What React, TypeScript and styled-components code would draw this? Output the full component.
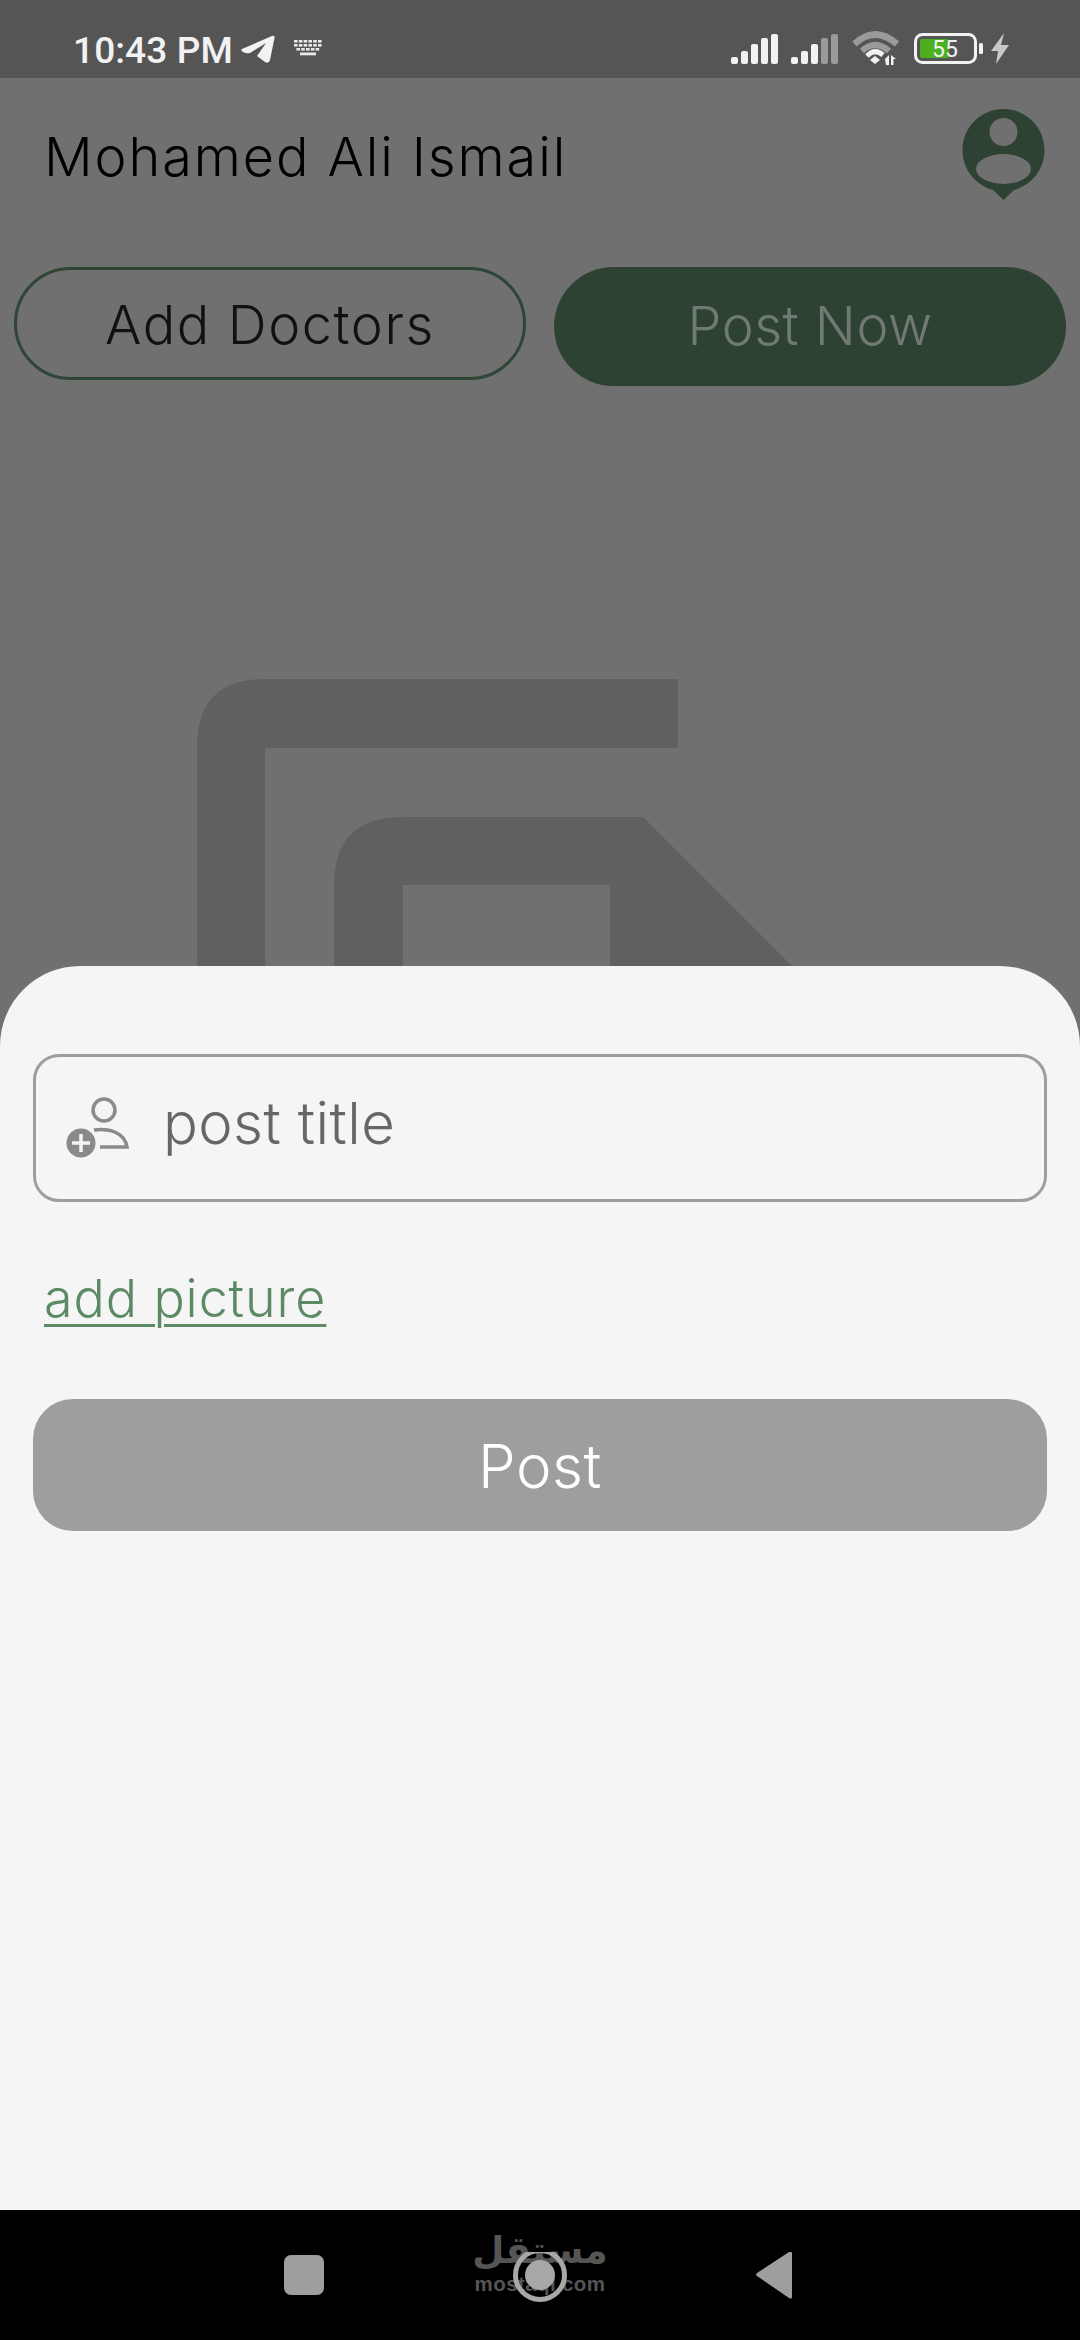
import React from "react";
import styled, { createGlobalStyle } from "styled-components";

const Global = createGlobalStyle`
  html, body { margin: 0; padding: 0; background: #707070; }
  * { box-sizing: border-box; }
`;

const Phone = styled.div`
  width: 1080px;
  height: 2340px;
  display: flex;
  flex-direction: column;
  overflow: hidden;
  background: #707070;
  font-family: Inter, "Noto Sans", sans-serif;
  font-weight: 300;
`;

const StatusBar = styled.div`
  height: 78px;
  flex: none;
  background: #555555;
  display: flex;
  align-items: flex-start;
  padding: 31px 71px 0 73px;
  color: #f2f2f2;
`;

const Time = styled.span`
  font-family: Roboto, sans-serif;
  font-weight: 500;
  font-size: 37px;
  line-height: 37px;
  margin-top: 1px;
  letter-spacing: 0.1px;
`;

const StatusLeft = styled.div`
  display: flex;
  align-items: flex-start;
`;

const StatusRight = styled.div`
  display: flex;
  align-items: flex-start;
  margin-left: auto;
`;

const Backdrop = styled.div`
  height: 888px;
  flex: none;
  overflow: hidden;
  display: flex;
  flex-direction: column;
`;

const Header = styled.div`
  display: flex;
  justify-content: space-between;
  padding: 31px 34px 0 44px;
  height: 190px;
`;

const Name = styled.h1`
  margin: 0;
  font-size: 54px;
  font-weight: 300;
  line-height: 62px;
  padding-top: 17px;
  letter-spacing: 1.9px;
  color: #000;
  white-space: nowrap;
`;

const Actions = styled.div`
  display: flex;
  align-items: flex-start;
  justify-content: space-between;
  padding: 0 14px;
`;

const PillButton = styled.button<{ $filled?: boolean }>`
  width: 512px;
  height: ${(p) => (p.$filled ? "119px" : "113px")};
  border-radius: 60px;
  border: ${(p) => (p.$filled ? "none" : "3px solid #2f4535")};
  background: ${(p) => (p.$filled ? "#2d4232" : "transparent")};
  color: ${(p) => (p.$filled ? "#707a72" : "#111")};
  font: inherit;
  font-size: 54px;
  padding: ${(p) => (p.$filled ? "0 0 2px" : "2px 0 0")};
  letter-spacing: ${(p) => (p.$filled ? "0.5px" : "1.6px")};
`;

const LogoMark = styled.svg`
  display: block;
  flex: none;
  margin: 293px 0 0 197px;
  fill: #606060;
`;

const Sheet = styled.div`
  height: 1244px;
  flex: none;
  background: #f5f5f5;
  border-radius: 80px 80px 0 0;
  padding: 88px 33px 0;
  display: flex;
  flex-direction: column;
`;

const Field = styled.label`
  height: 148px;
  flex: none;
  border: 3px solid #9e9e9e;
  border-radius: 26px;
  display: flex;
  align-items: center;
  padding: 0 0 0 30px;
`;

const FieldInput = styled.input`
  border: none;
  background: transparent;
  outline: none;
  flex: 1;
  margin-left: 33px;
  min-width: 0;
  padding: 0 0 10px;
  font: inherit;
  font-size: 58px;
  letter-spacing: 0.4px;
  color: #666;
  &::placeholder { color: #666666; opacity: 1; }
`;

const PictureLink = styled.a`
  align-self: flex-start;
  margin: 67px 0 0 11px;
  font-size: 52px;
  line-height: 60px;
  letter-spacing: 0.9px;
  color: #5c8a65;
  text-decoration: underline;
  text-decoration-thickness: 3px;
  text-underline-offset: 7px;
`;

const PostButton = styled.button`
  margin-top: 70px;
  height: 132px;
  flex: none;
  border: none;
  border-radius: 40px;
  background: #9e9e9e;
  color: #fff;
  font: inherit;
  font-size: 60px;
  letter-spacing: 0.5px;
  padding: 2px 0 0;
`;

const NavBar = styled.div`
  flex: 1;
  background: #000;
  position: relative;
  display: flex;
  justify-content: center;
  padding-top: 42px;
`;

const NavIcons = styled.svg`
  display: block;
  position: relative;
  fill: #9e9e9e;
`;

const Watermark = styled.div`
  position: absolute;
  left: 470px;
  top: 17px;
  width: 140px;
  text-align: center;
  color: #555;
`;

const WatermarkArabic = styled.div`
  font-family: "DejaVu Sans", sans-serif;
  font-weight: 700;
  font-size: 37px;
  line-height: 47px;
`;

const WatermarkLatin = styled.div`
  font-family: "Liberation Sans", sans-serif;
  font-weight: 700;
  font-size: 20.5px;
  line-height: 20px;
  letter-spacing: 0.4px;
`;

const SpacedSvg = styled.svg<{ $left: number; $top?: number }>`
  display: block;
  flex: none;
  margin-left: ${(p) => p.$left}px;
  margin-top: ${(p) => p.$top ?? 0}px;
`;

function Signal({ dim }: { dim?: boolean }) {
  const bars = [
    [0, 24, 7, 7],
    [10, 18, 7, 13],
    [20, 11, 7, 20],
    [30, 5, 7, 26],
    [40, 1, 7, 30],
  ];
  return (
    <>
      {bars.map(([x, y, w, h], i) => (
        <rect
          key={i}
          x={x}
          y={y}
          width={w}
          height={h}
          rx={2}
          fill={dim && i >= 3 ? "#9a9a9a" : "#f2f2f2"}
        />
      ))}
    </>
  );
}

export default function App() {
  return (
    <Phone>
      <Global />
      <StatusBar>
        <StatusLeft>
          <Time>10:43 PM</Time>
          <SpacedSvg $left={8} $top={3} width="35" height="30" viewBox="0 0 35 30">
            <path
              d="M1 15 L31 2 Q34 1 33.5 4 L29 26 Q28 30 24 28 L16 22 L25 9 L9 19 Q6 20 2 18 Q-1 16 1 15Z"
              fill="#f2f2f2"
            />
          </SpacedSvg>
          <SpacedSvg $left={18} $top={9} width="28" height="16" viewBox="0 0 28 16" fill="#e8e8e8">
            {[0, 1].map((r) =>
              [0, 1, 2, 3, 4, 5].map((c) => (
                <rect key={`${r}${c}`} x={c * 4.8} y={r * 4} width="3.6" height="2.6" />
              ))
            )}
            {[0, 1, 2, 3, 4].map((c) => (
              <rect key={c} x={2.4 + c * 4.8} y={8} width="3.6" height="2.6" />
            ))}
            <rect x="6" y="12.5" width="16" height="2.8" />
          </SpacedSvg>
        </StatusLeft>
        <StatusRight>
          <SpacedSvg $left={0} $top={2} width="48" height="31" viewBox="0 0 48 31">
            <Signal />
          </SpacedSvg>
          <SpacedSvg $left={12} $top={2} width="48" height="31" viewBox="0 0 48 31">
            <Signal dim />
          </SpacedSvg>
          <SpacedSvg $left={13} $top={0} width="48" height="35" viewBox="0 0 48 35" fill="none">
            <path d="M2.5 13 Q23 -6 45 13" stroke="#9a9a9a" strokeWidth="6.5" />
            <path d="M10 20 Q23 8 37 20" stroke="#9a9a9a" strokeWidth="6" />
            <path d="M15 25 Q23 17 31 24" stroke="#f2f2f2" strokeWidth="5" />
            <path d="M18 29 L23 25 L28 29 L23 33Z" fill="#f2f2f2" />
            <path d="M33 28 L37 24 V34 H34Z M39 24 L44 28 L41.5 28 V34 H39Z" fill="#f2f2f2" />
          </SpacedSvg>
          <SpacedSvg $left={14} $top={2} width="70" height="31" viewBox="0 0 70 31" fill="none">
            <rect x="1.5" y="1.5" width="60" height="28" rx="7" stroke="#f2f2f2" strokeWidth="3" />
            <rect x="6" y="6" width="29" height="19" rx="2" fill="#4caf1e" />
            <rect x="65" y="10" width="4" height="11" rx="1.5" fill="#f2f2f2" />
            <text
              x="31"
              y="24"
              textAnchor="middle"
              fontFamily="Roboto, sans-serif"
              fontSize="23"
              fontWeight="400"
              fill="#f2f2f2"
            >
              55
            </text>
          </SpacedSvg>
          <SpacedSvg $left={7} $top={2} width="18" height="31" viewBox="0 0 18 31">
            <path d="M13 0 L0 18 H7 L5 31 L18 12 H10Z" fill="#c8c8c8" />
          </SpacedSvg>
        </StatusRight>
      </StatusBar>

      <Backdrop>
        <Header>
          <Name>Mohamed Ali Ismail</Name>
          <svg width="84" height="92" viewBox="0 0 84 92">
            <path
              d="M41.5 0 C64 0 82.5 18 82.5 41 C82.5 60 70 76 52 81 L41.5 91 L31 81 C13 76 0.5 60 0.5 41 C0.5 18 19 0 41.5 0Z"
              fill="#2d4232"
            />
            <circle cx="41.5" cy="23" r="14" fill="#707070" />
            <ellipse cx="41.5" cy="60" rx="27.5" ry="15" fill="#707070" />
          </svg>
        </Header>
        <Actions>
          <PillButton>Add Doctors</PillButton>
          <PillButton $filled>Post Now</PillButton>
        </Actions>
        <LogoMark width="620" height="287" viewBox="0 0 620 287">
          <path d="M0 287 V68 Q0 0 68 0 H481 V69 H68 V287Z" />
          <path d="M137 287 V206 Q137 138 206 138 H446 L595 287 H413 V206 H206 V287Z" />
        </LogoMark>
      </Backdrop>

      <Sheet>
        <Field>
          <svg width="64" height="62" viewBox="0 0 64 62" fill="none">
            <circle cx="38" cy="13" r="11" stroke="#8a8a8a" strokeWidth="3.5" />
            <path d="M28 33 C44 31 59 36 61 50 H34" stroke="#8a8a8a" strokeWidth="3.5" />
            <circle cx="15" cy="46" r="14.5" fill="#8a8a8a" />
            <path d="M15 37 V55 M6 46 H24" stroke="#f5f5f5" strokeWidth="3.5" />
          </svg>
          <FieldInput placeholder="post title" />
        </Field>
        <PictureLink>add picture</PictureLink>
        <PostButton>Post</PostButton>
      </Sheet>

      <NavBar>
        <Watermark>
          <WatermarkArabic>مستقل</WatermarkArabic>
          <WatermarkLatin>mostaql.com</WatermarkLatin>
        </Watermark>
        <NavIcons width="512" height="62" viewBox="0 0 512 62">
          <rect x="0" y="3" width="40" height="40" rx="7" />
          <circle cx="256" cy="23" r="24.5" fill="none" stroke="#a8a8a8" strokeWidth="5" />
          <circle cx="256" cy="23" r="15" fill="#a8a8a8" />
          <path d="M508 1 V45 Q508 48 505 46 L473 24 Q471 23 473 21 L505 0 Q508 -1 508 1Z" />
        </NavIcons>
      </NavBar>
    </Phone>
  );
}
